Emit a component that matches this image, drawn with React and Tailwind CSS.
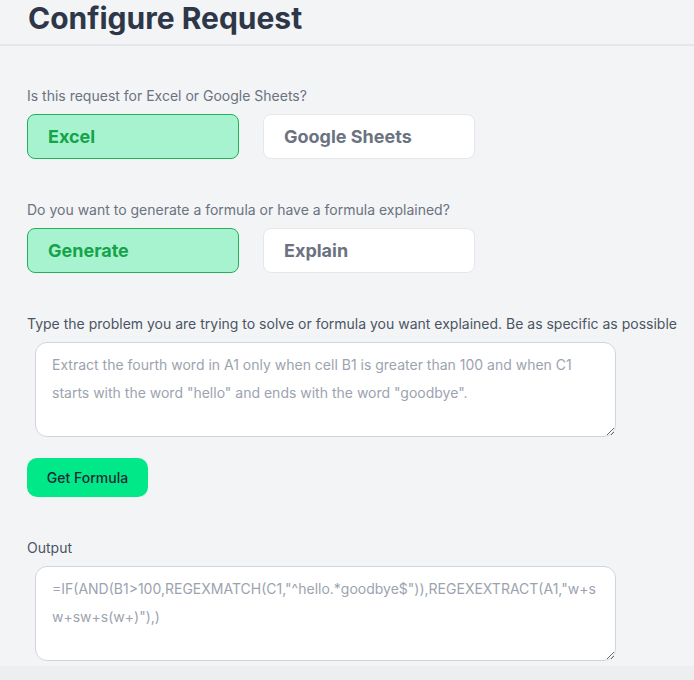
import { useState } from 'react';

const OUTPUT =
  '=IF(AND(B1>100,REGEXMATCH(C1,"^hello.*goodbye$")),REGEXEXTRACT(A1,"w+sw+sw+s(w+)"),)';

function Choice({ label, active, onClick }) {
  return (
    <button
      type="button"
      onClick={onClick}
      className={
        active
          ? 'h-[45px] w-[212px] rounded-lg border border-[#22b15a] bg-[#a7f3d0] pl-5 text-left text-lg font-bold text-[#16a34a]'
          : 'h-[45px] w-[212px] rounded-lg border border-[#e5e7eb] bg-white pl-5 text-left text-lg font-bold text-[#6b7280]'
      }
    >
      {label}
    </button>
  );
}

export default function App() {
  const [target, setTarget] = useState('excel');
  const [mode, setMode] = useState('generate');

  return (
    <div className="min-h-screen bg-[#f3f4f6] font-['Inter','Liberation_Sans',sans-serif]">
      <header className="border-b-2 border-[#e5e7eb] px-[28px] pb-[8px]">
        <h1 className="text-[30px] font-bold leading-[36px] text-[#2d3748]">Configure Request</h1>
      </header>

      <main className="px-[27px]">
        <section className="pt-[40px]">
          <p className="text-sm leading-5 text-[#6b7280]">Is this request for Excel or Google Sheets?</p>
          <div className="mt-2 flex gap-6">
            <Choice label="Excel" active={target === 'excel'} onClick={() => setTarget('excel')} />
            <Choice label="Google Sheets" active={target === 'sheets'} onClick={() => setTarget('sheets')} />
          </div>
        </section>

        <section className="pt-[41px]">
          <p className="text-sm leading-5 text-[#6b7280]">
            Do you want to generate a formula or have a formula explained?
          </p>
          <div className="mt-2 flex gap-6">
            <Choice label="Generate" active={mode === 'generate'} onClick={() => setMode('generate')} />
            <Choice label="Explain" active={mode === 'explain'} onClick={() => setMode('explain')} />
          </div>
        </section>

        <section className="pt-[41px]">
          <p className="whitespace-nowrap text-sm leading-5 text-[#4b5563]">
            Type the problem you are trying to solve or formula you want explained. Be as specific as possible
          </p>
          <textarea
            className="mt-2 ml-2 block h-[95px] w-[581px] rounded-xl border border-[#d1d5db] bg-white px-4 py-2 text-sm leading-7 text-[#374151] placeholder:text-[#9ca3af] focus:outline-none"
            placeholder={'Extract the fourth word in A1 only when cell B1 is greater than 100 and when C1 starts with the word "hello" and ends with the word "goodbye".'}
          />
          <button
            type="button"
            className="mt-[21px] h-[39px] w-[121px] rounded-[10px] bg-[#00e887] text-sm font-medium text-[#1f2937]"
          >
            Get Formula
          </button>
        </section>

        <section className="pt-[41px]">
          <p className="text-sm leading-5 text-[#4b5563]">Output</p>
          <textarea
            readOnly
            value={OUTPUT}
            className="mt-2 ml-2 block h-[95px] w-[581px] rounded-xl border border-[#d1d5db] bg-white px-4 py-2 text-sm leading-7 text-[#9ca3af] focus:outline-none"
          />
        </section>
      </main>

      <div className="mt-[5px] h-[30px] bg-[#eceef0]" />
    </div>
  );
}
